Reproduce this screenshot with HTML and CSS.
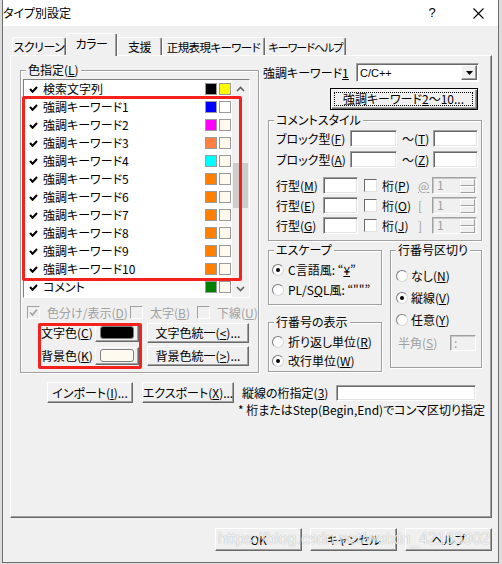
FILE: index.html
```html
<!DOCTYPE html>
<html lang="ja">
<head>
<meta charset="utf-8">
<title>タイプ別設定</title>
<link rel="stylesheet" href="styles.css">
</head>
<body>
<div class="window">
  <div class="titlebar">
    <span class="title">タイプ別設定</span>
    <span class="tb-help">?</span>
    <span class="tb-close"><svg width="11" height="11" viewBox="0 0 11 11"><path d="M0.5 0.5L10.5 10.5M10.5 0.5L0.5 10.5" stroke="#000" stroke-width="1.1" fill="none"/></svg></span>
  </div>

  <div class="tabs">
    <div class="tab w1">スクリーン</div>
    <div class="tab active w2">カラー</div>
    <div class="tab w3">支援</div>
    <div class="tab w4">正規表現キーワード</div>
    <div class="tab w5">キーワードヘルプ</div>
  </div>

  <div class="panel">
    <div class="top">
      <div class="group g-colors">
        <div class="legend">色指定(<u>L</u>)</div>
        <div class="listbox">
          <div class="rows">
            <div class="row"><svg class="chk" viewBox="0 0 9 7"><polyline points="1,3 3.6,5.8 8,1" /></svg><span class="name">検索文字列</span><i class="sw c-black"></i><i class="sw c-yellow"></i></div>
            <div class="row"><svg class="chk" viewBox="0 0 9 7"><polyline points="1,3 3.6,5.8 8,1" /></svg><span class="name">強調キーワード1</span><i class="sw c-blue"></i><i class="sw c-white"></i></div>
            <div class="row"><svg class="chk" viewBox="0 0 9 7"><polyline points="1,3 3.6,5.8 8,1" /></svg><span class="name">強調キーワード2</span><i class="sw c-magenta"></i><i class="sw c-cream"></i></div>
            <div class="row"><svg class="chk" viewBox="0 0 9 7"><polyline points="1,3 3.6,5.8 8,1" /></svg><span class="name">強調キーワード3</span><i class="sw c-coral"></i><i class="sw c-cream"></i></div>
            <div class="row"><svg class="chk" viewBox="0 0 9 7"><polyline points="1,3 3.6,5.8 8,1" /></svg><span class="name">強調キーワード4</span><i class="sw c-cyan"></i><i class="sw c-cream"></i></div>
            <div class="row"><svg class="chk" viewBox="0 0 9 7"><polyline points="1,3 3.6,5.8 8,1" /></svg><span class="name">強調キーワード5</span><i class="sw c-orange"></i><i class="sw c-cream"></i></div>
            <div class="row"><svg class="chk" viewBox="0 0 9 7"><polyline points="1,3 3.6,5.8 8,1" /></svg><span class="name">強調キーワード6</span><i class="sw c-orange"></i><i class="sw c-cream"></i></div>
            <div class="row"><svg class="chk" viewBox="0 0 9 7"><polyline points="1,3 3.6,5.8 8,1" /></svg><span class="name">強調キーワード7</span><i class="sw c-orange"></i><i class="sw c-cream"></i></div>
            <div class="row"><svg class="chk" viewBox="0 0 9 7"><polyline points="1,3 3.6,5.8 8,1" /></svg><span class="name">強調キーワード8</span><i class="sw c-orange"></i><i class="sw c-cream"></i></div>
            <div class="row"><svg class="chk" viewBox="0 0 9 7"><polyline points="1,3 3.6,5.8 8,1" /></svg><span class="name">強調キーワード9</span><i class="sw c-orange"></i><i class="sw c-cream"></i></div>
            <div class="row"><svg class="chk" viewBox="0 0 9 7"><polyline points="1,3 3.6,5.8 8,1" /></svg><span class="name">強調キーワード10</span><i class="sw c-orange"></i><i class="sw c-cream"></i></div>
            <div class="row"><svg class="chk" viewBox="0 0 9 7"><polyline points="1,3 3.6,5.8 8,1" /></svg><span class="name">コメント</span><i class="sw c-green"></i><i class="sw c-cream"></i></div>
          </div>
          <div class="sb">
            <div class="sb-btn"><svg width="9" height="6" viewBox="0 0 9 6"><polyline points="1,5 4.5,1.5 8,5" /></svg></div>
            <div class="sb-track"><div class="sb-thumb"></div></div>
            <div class="sb-btn"><svg width="9" height="6" viewBox="0 0 9 6"><polyline points="1,1 4.5,4.5 8,1" /></svg></div>
          </div>
        </div>

        <div class="checks">
          <div class="ck-item ck1"><span class="cb dis"><svg viewBox="0 0 11 11"><polyline points="2,5.5 4.5,8 9,2.5" /></svg></span><span>色分け/表示(<u>D</u>)</span></div>
          <div class="ck-item ck2"><span class="cb dis"></span><span>太字(<u>B</u>)</span></div>
          <div class="ck-item"><span class="cb dis"></span><span>下線(<u>U</u>)</span></div>
        </div>

        <div class="colorsec">
          <div class="cs-left">
            <div class="cs-row"><span class="cs-label">文字色(<u>C</u>)</span><span class="btn colorbtn"><span class="swatch fg"></span></span></div>
            <div class="cs-row"><span class="cs-label">背景色(<u>K</u>)</span><span class="btn colorbtn"><span class="swatch bgc"></span></span></div>
          </div>
          <div class="cs-right">
            <div class="btn cs-btn"><span>文字色統一(<u>&lt;</u>)...</span></div>
            <div class="btn cs-btn"><span>背景色統一(<u>&gt;</u>)...</span></div>
          </div>
        </div>
      </div>

      <div class="rightcol">
        <div class="kwrow">
          <span class="kwlabel">強調キーワード<u>1</u></span>
          <div class="combo">
            <span class="combo-text">C/C++</span>
            <span class="combo-arrow"><svg width="7" height="4" viewBox="0 0 7 4"><polygon points="0,0 7,0 3.5,4" /></svg></span>
          </div>
        </div>
        <div class="kwbtn"><div class="focus"><span>強調キーワード<u>2</u>〜10...</span></div></div>

        <div class="group g-comment">
          <div class="legend">コメントスタイル</div>
          <div class="cm-row first">
            <span class="lbl-block">ブロック型(<u>F</u>)</span><span class="inp w47"></span>
            <span class="lbl-tilde">〜(<u>T</u>)</span><span class="inp w45"></span>
          </div>
          <div class="cm-row">
            <span class="lbl-block">ブロック型(<u>A</u>)</span><span class="inp w47"></span>
            <span class="lbl-tilde">〜(<u>Z</u>)</span><span class="inp w45"></span>
          </div>
          <div class="cm-row line first-line">
            <span class="lbl-line">行型(<u>M</u>)</span><span class="inp w35"></span>
            <span class="cb cm-cb"></span><span class="lbl-keta">桁(<u>P</u>)</span><span class="sym"><u>@</u></span>
            <span class="spin"><span class="spin-val">1</span><span class="spin-btns"><span class="spin-b"></span><span class="spin-b"></span></span></span>
          </div>
          <div class="cm-row line">
            <span class="lbl-line">行型(<u>E</u>)</span><span class="inp w35"></span>
            <span class="cb cm-cb"></span><span class="lbl-keta">桁(<u>O</u>)</span><span class="sym">[</span>
            <span class="spin"><span class="spin-val">1</span><span class="spin-btns"><span class="spin-b"></span><span class="spin-b"></span></span></span>
          </div>
          <div class="cm-row line">
            <span class="lbl-line">行型(<u>G</u>)</span><span class="inp w35"></span>
            <span class="cb cm-cb"></span><span class="lbl-keta">桁(<u>J</u>)</span><span class="sym">]</span>
            <span class="spin"><span class="spin-val">1</span><span class="spin-btns"><span class="spin-b"></span><span class="spin-b"></span></span></span>
          </div>
        </div>

        <div class="lower">
          <div class="leftstack">
            <div class="group g-escape">
              <div class="legend">エスケープ</div>
              <div class="rd-row r1"><span class="rd on"></span><span>C言語風: “<u>¥</u>”</span></div>
              <div class="rd-row r2"><span class="rd"></span><span>PL/S<u>Q</u>L風: “""”</span></div>
            </div>
            <div class="group g-linedisp">
              <div class="legend">行番号の表示</div>
              <div class="rd-row r1"><span class="rd"></span><span>折り返し単位(<u>R</u>)</span></div>
              <div class="rd-row r3"><span class="rd on"></span><span>改行単位(<u>W</u>)</span></div>
            </div>
          </div>
          <div class="group g-linebreak">
            <div class="legend">行番号区切り</div>
            <div class="lb-row lb1"><span class="rd"></span><span>なし(<u>N</u>)</span></div>
            <div class="lb-row"><span class="rd on"></span><span>縦線(<u>V</u>)</span></div>
            <div class="lb-row"><span class="rd"></span><span>任意(<u>Y</u>)</span></div>
            <div class="lb-row half"><span class="half-lbl">半角(<u>S</u>)</span><span class="inp dis-inp">:</span></div>
          </div>
        </div>
      </div>
    </div>

    <div class="bottomrow">
      <div class="btn imp"><span>インポート(<u>I</u>)...</span></div>
      <div class="btn exp"><span>エクスポート(<u>X</u>)...</span></div>
      <div class="noteblock">
        <div class="nb-row"><span class="nb-label">縦線の桁指定(<u>3</u>)</span><span class="inp nb-inp"></span></div>
        <div class="note">* 桁またはStep(Begin,End)でコンマ区切り指定</div>
      </div>
    </div>
  </div>

  <div class="dlg-buttons">
    <div class="btn dlg"><span>OK</span></div>
    <div class="btn dlg"><span>キャンセル</span></div>
    <div class="btn dlg"><span>ヘルプ</span></div>
  </div>

  <div class="annot a1"></div>
  <div class="annot a2"></div>
  <div class="watermark">https://blog.csdn.net/weixin_42163902</div>
</div>
</body>
</html>
```

FILE: styles.css
```css
* { box-sizing: border-box; }

body {
  margin: 0;
  background: #dcdcdc;
  font-family: "Noto Sans CJK JP", "Noto Sans", sans-serif;
  font-size: 12px;
  line-height: 14px;
  color: #000;
  font-feature-settings: "palt";
}

u { text-decoration: underline; text-underline-offset: 1px; }

.window {
  position: relative;
  margin-left: 2px;
  width: 497px;
  height: 563px;
  border: 1px solid #6e6e6e;
  border-top: 0;
  background: #f0f0f0;
  overflow: hidden;
}

/* title bar */
.titlebar {
  height: 26px;
  background: #fff;
  display: flex;
  align-items: center;
}
.title { flex: 1; }
.tb-help {
  width: 20px;
  text-align: center;
  margin-right: 16px;
  font-family: "Liberation Sans", sans-serif;
  font-size: 13px;
}
.tb-close {
  width: 40px;
  display: flex;
  justify-content: center;
  align-items: center;
}

/* tabs */
.tabs {
  display: flex;
  align-items: flex-end;
  height: 29px;
  padding-left: 9px;
  position: relative;
  z-index: 2;
}
.tab {
  height: 18px;
  border-top: 1px solid #fff;
  border-left: 1px solid #fff;
  border-right: 1px solid #696969;
  box-shadow: inset -1px 0 0 #a0a0a0;
  border-radius: 2px 2px 0 0;
  display: flex;
  align-items: center;
  justify-content: center;
  white-space: nowrap;
  background: #f0f0f0;
  letter-spacing: -0.5px;
  overflow: hidden;
}
.tab.active {
  height: 23px;
  margin-bottom: -1px;
  align-items: flex-start;
  padding-top: 3px;
}
.w1 { width: 54px; }
.w2 { width: 51px; }
.w3 { width: 45px; }
.w4 { width: 103px; font-size: 11.5px; letter-spacing: -0.6px; }
.w5 { width: 81px; font-size: 11px; letter-spacing: -1px; }

/* panel */
.panel {
  position: relative;
  z-index: 1;
  margin-left: 7px;
  width: 482px;
  height: 463px;
  border: 1px solid;
  border-color: #fff #696969 #696969 #fff;
  box-shadow: inset -1px -1px 0 #a0a0a0;
  padding: 7px 0 0 9px;
}

.top { display: flex; align-items: flex-start; }

.group {
  border: 1px solid #a0a0a0;
  box-shadow: inset 1px 1px 0 #fff, 1px 1px 0 #fff;
}
.legend {
  width: max-content;
  margin: -8px 0 0 5px;
  padding: 0 2px;
  height: 14px;
  line-height: 14px;
  background: #f0f0f0;
  position: relative;
  white-space: nowrap;
}

/* colour group */
.g-colors { margin-top: 7px; width: 239px; height: 303px; }

.listbox {
  margin: 2px 0 0 2px;
  width: 227px;
  height: 219px;
  display: flex;
  background: #fff;
  border: 1px solid;
  border-color: #828282 #fff #fff #828282;
}
.rows { width: 208px; }
.row {
  height: 18px;
  display: flex;
  align-items: center;
  padding-left: 5px;
  padding-right: 1px;
}
.chk {
  width: 9px;
  height: 7px;
  margin-right: 5px;
  fill: none;
  stroke: #000;
  stroke-width: 2;
}
.name { flex: 1; white-space: nowrap; }
.sw {
  width: 12px;
  height: 12px;
  border: 1px solid #9a9a9a;
}
.sw + .sw { margin-left: 2px; }
.c-black { background: #000; }
.c-yellow { background: #ffff00; }
.c-blue { background: #0000ff; }
.c-white { background: #fff; }
.c-magenta { background: #ff00ff; }
.c-coral { background: #ff8040; }
.c-cyan { background: #00ffff; }
.c-orange { background: #ff8000; }
.c-green { background: #008000; }
.c-cream { background: #fff9ee; }

.sb {
  width: 17px;
  display: flex;
  flex-direction: column;
  background: #f0f0f0;
}
.sb-btn {
  height: 17px;
  display: flex;
  align-items: center;
  justify-content: center;
}
.sb-btn svg { fill: none; stroke: #606060; stroke-width: 1.6; }
.sb-track { flex: 1; }
.sb-thumb {
  margin: 66px 0 0 1px;
  width: 15px;
  height: 45px;
  background: #cdcdcd;
}

.checks {
  display: flex;
  align-items: center;
  margin: 8px 0 0 6px;
  height: 13px;
}
.ck-item {
  display: flex;
  align-items: center;
  gap: 7px;
  color: #a0a0a0;
  white-space: nowrap;
}
.ck1 { width: 103px; }
.ck2 { width: 67px; }

.cb {
  width: 13px;
  height: 13px;
  flex: none;
  display: flex;
  align-items: center;
  justify-content: center;
  background: #fff;
  border: 1px solid;
  border-color: #696969 #e3e3e3 #e3e3e3 #696969;
}
.cb.dis {
  background: #f0f0f0;
  border-color: #a0a0a0 #fff #fff #a0a0a0;
}
.cb svg { width: 11px; height: 11px; fill: none; stroke: #a0a0a0; stroke-width: 1.6; }

.colorsec { display: flex; margin-top: 4px; }
.cs-left {
  margin-left: 20px;
  display: flex;
  flex-direction: column;
  gap: 3px;
}
.cs-row { height: 20px; display: flex; align-items: center; }
.cs-label { width: 54px; white-space: nowrap; }
.cs-right {
  margin-left: 8px;
  display: flex;
  flex-direction: column;
  gap: 3px;
}

.btn {
  display: flex;
  align-items: center;
  justify-content: center;
  background: #f0f0f0;
  border: 1px solid;
  border-color: #fff #696969 #696969 #fff;
  box-shadow: inset -1px -1px 0 #a0a0a0;
  white-space: nowrap;
}
.colorbtn {
  width: 44px;
  height: 18px;
  padding: 1px 4px 2px 4px;
  align-items: stretch;
}
.swatch {
  flex: 1;
  border: 1px solid #808080;
  border-radius: 3px;
}
.swatch.fg { background: #000; }
.swatch.bgc { background: #fffaf0; }
.cs-btn { width: 102px; height: 20px; }

/* right column */
.rightcol { margin-left: 4px; width: 219px; }
.kwrow { display: flex; align-items: center; height: 19px; }
.kwlabel { width: 93px; white-space: nowrap; }
.combo {
  width: 123px;
  height: 19px;
  display: flex;
  align-items: center;
  background: #fff;
  border: 1px solid;
  border-color: #a0a0a0 #fff #fff #a0a0a0;
  box-shadow: inset 1px 1px 0 #696969;
}
.combo-text {
  flex: 1;
  padding-left: 3px;
  font-family: "Liberation Sans", sans-serif;
  font-size: 11px;
}
.combo-arrow {
  width: 16px;
  height: 15px;
  margin-right: 1px;
  display: flex;
  align-items: center;
  justify-content: center;
  background: #f0f0f0;
  border: 1px solid;
  border-color: #fff #696969 #696969 #fff;
  box-shadow: inset -1px -1px 0 #a0a0a0;
}
.combo-arrow svg { fill: #000; }

.kwbtn {
  margin: 6px 0 0 67px;
  width: 148px;
  height: 22px;
  border: 1px solid #000;
  background: #f0f0f0;
  box-shadow: inset 1px 1px 0 #fff, inset -1px -1px 0 #696969, inset -2px -2px 0 #a0a0a0;
  padding: 3px 4px 3px 3px;
}
.kwbtn .focus {
  height: 100%;
  border: 1px dotted #000;
  display: flex;
  align-items: center;
  justify-content: center;
  white-space: nowrap;
}

/* comment style */
.g-comment { margin: 10px 0 0 5px; width: 214px; height: 121px; }
.cm-row {
  display: flex;
  align-items: center;
  height: 17px;
  margin-top: 4px;
  padding-left: 7px;
  white-space: nowrap;
}
.cm-row.first { margin-top: 3px; }
.cm-row.line { margin-top: 3px; }
.cm-row.first-line { margin-top: 9px; }
.lbl-block { width: 74px; }
.lbl-tilde { width: 31px; margin-left: 5px; }
.lbl-line { width: 47px; }
.lbl-keta { width: 36px; margin-left: 5px; }
.cm-cb { margin-left: 6px; }
.sym { width: 14px; color: #a0a0a0; }

.inp {
  display: block;
  height: 17px;
  background: #fff;
  border: 1px solid;
  border-color: #a0a0a0 #fff #fff #a0a0a0;
  box-shadow: inset 1px 1px 0 #696969, inset -1px -1px 0 #e3e3e3;
}
.w47 { width: 47px; }
.w45 { width: 45px; }
.w35 { width: 35px; }

.spin {
  width: 45px;
  height: 17px;
  display: flex;
  background: #f0f0f0;
  border: 1px solid;
  border-color: #a0a0a0 #fff #fff #a0a0a0;
  box-shadow: inset 1px 1px 0 #c8c8c8;
}
.spin-val { flex: 1; padding-left: 4px; color: #a0a0a0; line-height: 14px; }
.spin-btns { width: 16px; display: flex; flex-direction: column; padding: 1px 1px 0 0; }
.spin-b {
  flex: 1;
  background: #f0f0f0;
  border: 1px solid;
  border-color: #fff #a0a0a0 #a0a0a0 #fff;
}

/* lower groups */
.lower { display: flex; gap: 8px; margin: 9px 0 0 5px; }
.leftstack { width: 114px; }
.g-escape { height: 55px; }
.g-linedisp { margin-top: 17px; height: 50px; }
.g-linebreak { width: 92px; height: 118px; }

.rd-row {
  display: flex;
  align-items: center;
  gap: 4px;
  height: 14px;
  padding-left: 3px;
  white-space: nowrap;
}
.rd-row.r1 { margin-top: 6px; }
.rd-row.r2 { margin-top: 6px; }
.rd-row.r3 { margin-top: 5px; }

.rd {
  width: 12px;
  height: 12px;
  flex: none;
  border-radius: 50%;
  background: #fff;
  border: 1px solid;
  border-color: #7a7a7a #d8d8d8 #d8d8d8 #7a7a7a;
  display: flex;
  align-items: center;
  justify-content: center;
}
.rd.on::after {
  content: "";
  width: 4px;
  height: 4px;
  border-radius: 50%;
  background: #000;
}

.lb-row {
  display: flex;
  align-items: center;
  gap: 3px;
  height: 14px;
  margin-top: 8px;
  padding-left: 5px;
  white-space: nowrap;
}
.lb-row.lb1 { margin-top: 12px; }
.lb-row.half { height: 16px; padding-left: 7px; gap: 0; }
.half-lbl { width: 52px; color: #a0a0a0; }
.dis-inp {
  width: 26px;
  height: 16px;
  background: #f0f0f0;
  color: #a0a0a0;
  padding-left: 3px;
  line-height: 13px;
  box-shadow: inset 1px 1px 0 #c8c8c8;
}

/* bottom row */
.bottomrow { display: flex; margin-top: 9px; }
.imp { margin-left: 27px; width: 86px; height: 21px; }
.exp { margin-left: 9px; width: 92px; height: 21px; }
.noteblock { margin-left: 4px; display: flex; flex-direction: column; }
.nb-row { display: flex; align-items: center; height: 21px; }
.nb-label { margin-left: 4px; width: 94px; white-space: nowrap; }
.nb-inp { width: 140px; height: 16px; }
.note { line-height: 13px; white-space: nowrap; }

/* dialog buttons */
.dlg-buttons {
  display: flex;
  justify-content: flex-end;
  gap: 8px;
  margin-top: 10px;
  padding-right: 6px;
}
.dlg { width: 87px; height: 23px; }

/* annotations over the screenshot */
.annot {
  position: absolute;
  z-index: 5;
  border: 3px solid #f5211d;
  border-radius: 2px;
}
.a1 { left: 19px; top: 96px; width: 220px; height: 185px; }
.a2 { left: 35px; top: 323px; width: 104px; height: 46px; }

.watermark {
  position: absolute;
  z-index: 6;
  left: 215px;
  top: 529px;
  font-family: "Liberation Sans", sans-serif;
  font-size: 16px;
  line-height: 20px;
  color: rgba(255, 255, 255, 0.85);
  text-shadow: 0 0 1px rgba(0, 0, 0, 0.35);
  white-space: nowrap;
}
```
